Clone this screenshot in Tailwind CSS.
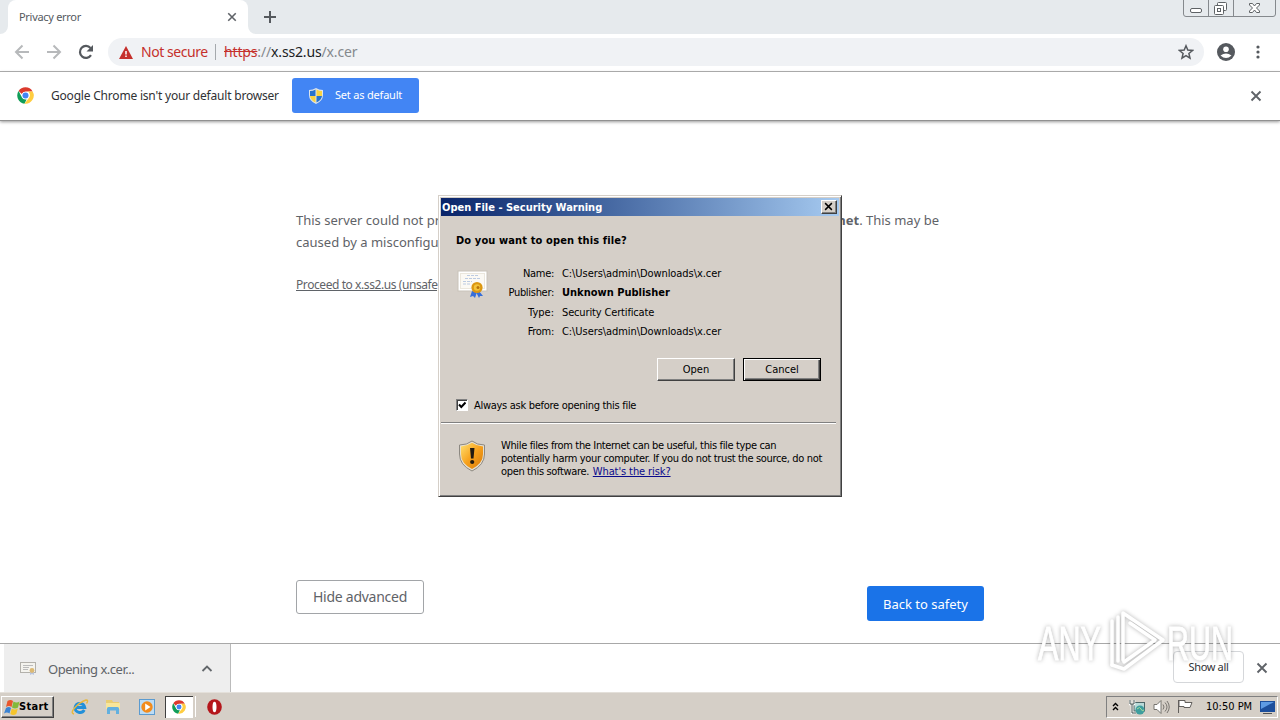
<!DOCTYPE html>
<html lang="en">
<head>
  <meta charset="UTF-8" />
  <meta name="viewport" content="width=device-width, initial-scale=1" />
  <title>Privacy error</title>
  <script src="https://cdn.jsdelivr.net/npm/@tailwindcss/browser@4"></script>
</head>
<body class="relative w-[1280px] h-[720px] overflow-hidden bg-white flex flex-col whitespace-nowrap font-['Noto_Sans','Open_Sans',sans-serif] text-[#5f6368]">

  <!-- shared icons -->
  <svg class="hidden">
    <symbol id="chrome" viewBox="0 0 48 48">
      <circle cx="24" cy="24" r="23" fill="#fff" />
      <path d="M24 1a23 23 0 0 1 20 11.500H24a11.500 11.500 0 0 0-10.500 7L4.500 11.500A23 23 0 0 1 24 1z" fill="#db3a2d" />
      <path d="M4.500 11.500 14 29.500A11.500 11.500 0 0 0 27 35L21 47A23 23 0 0 1 4.500 11.500z" fill="#109d58" />
      <path d="M44 12.500A23 23 0 0 1 21 47L34 30a11.500 11.500 0 0 0-4-17.500z" fill="#ffcd40" />
      <circle cx="24" cy="24" r="10" fill="#fff" />
      <circle cx="24" cy="24" r="8.500" fill="#4285f4" />
    </symbol>
    <symbol id="close" viewBox="0 0 12 12">
      <path d="M1.500 1.500l9 9M10.500 1.500l-9 9" stroke="currentColor" stroke-width="1.900" fill="none" />
    </symbol>
  </svg>

  <!-- tab strip -->
  <div class="h-[34px] shrink-0 bg-[#e6eaed] flex items-start">
    <div class="relative ml-2 h-[34px] w-[240px] bg-white rounded-t-lg flex items-center justify-between pl-[11px] pr-[11px]">
      <span class="text-[11px] tracking-[-0.3px] text-[#55595e]">Privacy error</span>
      <svg class="size-[10px] text-[#5f6368]"><use href="#close" /></svg>
      <svg class="absolute -left-2 bottom-0 size-2" viewBox="0 0 8 8"><path d="M8 0v8H0a8 8 0 0 0 8-8z" fill="#fff" /></svg>
      <svg class="absolute -right-2 bottom-0 size-2" viewBox="0 0 8 8"><path d="M0 0v8h8a8 8 0 0 1-8-8z" fill="#fff" /></svg>
    </div>
    <svg class="ml-4 mt-[11px] size-3" viewBox="0 0 12 12"><path d="M6 0v12M0 6h12" stroke="#55595e" stroke-width="2" /></svg>
    <svg class="ml-auto mr-1 w-[93px] h-[18px]" viewBox="0 0 93 18" fill="none" stroke="#85898d">
      <path d="M.5 0v14q0 2.500 2.500 2.500h87q2.500 0 2.500-2.500V0M25.500 0v16.500M50.500 0v16.500" />
      <g stroke="#5e6265" fill="#fff">
        <rect x="7.500" y="8.500" width="11" height="4" rx="1.500" />
        <rect x="34.500" y="2.500" width="9" height="8" rx="1" />
        <rect x="31.500" y="5.500" width="9" height="9" rx="1" />
        <rect x="34.500" y="8.500" width="3" height="3" />
        <path d="M66.500 3.500h3l2 2.500 2-2.500h3v1.500L73.500 8l3 3v1.500h-3l-2-2.500-2 2.500h-3V11l3-3-3-3z" />
      </g>
    </svg>
  </div>

  <!-- toolbar -->
  <div class="h-[38px] shrink-0 border-b border-[#adadad] flex items-center pl-[14px] pr-[20px] pb-px">
    <svg class="size-4" viewBox="0 0 16 16" fill="none" stroke="#b7b9bb" stroke-width="2"><path d="M15 8H2.500M8.500 1.500L2 8l6.500 6.500" /></svg>
    <svg class="ml-4 size-4" viewBox="0 0 16 16" fill="none" stroke="#b7b9bb" stroke-width="2"><path d="M1 8h12.500M7.500 1.500L14 8l-6.500 6.500" /></svg>
    <svg class="ml-4 size-4" viewBox="0 0 16 16"><path d="M13 11.200A6 6 0 1 1 12.500 4" fill="none" stroke="#55595e" stroke-width="2.200" /><path d="M15 1v6.500H8.500z" fill="#55595e" /></svg>
    <div class="ml-[14px] w-[1096px] h-7 rounded-full bg-[#f0f2f5] flex items-center pl-[11px] pr-[10px] text-[14px]">
      <svg class="w-[14px] h-[13px]" viewBox="0 0 14 13"><path d="M7 0l7 13H0z" fill="#c5302c" /><path d="M7 5v3.500M7 9.500v1.500" stroke="#fff" stroke-width="1.500" /></svg>
      <span class="ml-2 pb-[2px] text-[#c5302c] w-[67px] tracking-[-0.45px]">Not secure</span>
      <span class="ml-[7px] w-px h-4 bg-[#a5a9ad]"></span>
      <span class="ml-2 pb-[2px] text-[#85898d] tracking-[-0.15px]"><span class="text-[#c5302c] line-through">https</span>://<span class="text-[#202124]">x.ss2.us</span>/x.cer</span>
      <svg class="ml-auto size-4" viewBox="0 0 16 16"><path d="M8 1.800l1.800 4.300 4.700.4-3.600 3 1.100 4.600-4-2.500-4 2.500 1.100-4.600-3.600-3 4.700-.4z" fill="none" stroke="#55595e" stroke-width="1.500" /></svg>
    </div>
    <svg class="ml-[13px] size-[18px]" viewBox="0 0 18 18"><circle cx="9" cy="9" r="9" fill="#55595e" /><circle cx="9" cy="6.200" r="2.800" fill="#fff" /><path d="M3.500 12.500q5.500-4 11 0-5.500 5-11 0z" fill="#fff" /></svg>
    <svg class="ml-auto w-1 h-[14px]" viewBox="0 0 4 14" fill="#55595e"><circle cx="2" cy="2" r="1.600" /><circle cx="2" cy="7" r="1.600" /><circle cx="2" cy="12" r="1.600" /></svg>
  </div>

  <!-- default browser bar -->
  <div class="h-[49px] shrink-0 border-b border-[#919191] shadow-[0_1px_3px_#999] flex items-center pl-[17px] pr-[18px] pb-px">
    <svg class="size-[17px]"><use href="#chrome" /></svg>
    <span class="ml-[17px] w-[241px] text-[12px] tracking-[-0.2px] text-[#303134]">Google Chrome isn't your default browser</span>
    <div class="w-[127px] h-[35px] rounded-[3px] bg-[#4285f4] text-white text-[11px] flex items-center pl-[17px]">
      <svg class="w-[14px] h-[16px]" viewBox="0 0 14 16">
        <path d="M7 0q3 2 7 2v5q0 6-7 9Q0 13 0 7V2q4 0 7-2z" fill="#dce4ec" />
        <path d="M6.500 1.500V8H1V3q3 0 5.500-1.500zM7.500 8H13q-.6 4-5.500 6.500z" fill="#2673cf" />
        <path d="M7.500 1.500V8H13V3q-3 0-5.500-1.500zM6.500 8H1q.6 4 5.500 6.500z" fill="#f8d343" />
      </svg>
      <span class="ml-3 tracking-[-0.2px]">Set as default</span>
    </div>
    <svg class="ml-auto mt-px size-3 text-[#5f6368]"><use href="#close" /></svg>
  </div>

  <!-- page -->
  <div class="h-[522px] shrink-0 w-[688px] mx-auto flex flex-col text-[13px] leading-[22px]">
    <p class="mt-[88px] flex justify-between w-[643px]"><span>This server could not prove that it is x.ss2.us;</span><span><b>net</b>. This may be</span></p>
    <p>caused by a misconfiguration</p>
    <a class="mt-[21px] text-[12px] tracking-[-0.42px] underline">Proceed to x.ss2.us (unsafe)</a>
    <div class="mt-auto mb-[22px] flex justify-between">
      <div class="w-[128px] h-[34px] border border-[#a2a5a8] rounded-[3px] flex items-center justify-center text-[14px] tracking-[-0.25px]">Hide advanced</div>
      <div class="mt-[6px] w-[117px] h-[35px] rounded-[3px] bg-[#1a73e8] text-white flex items-center justify-center">Back to safety</div>
    </div>
  </div>

  <!-- download shelf -->
  <div class="h-[49px] shrink-0 border-t border-[#a8a8a8] flex items-center pl-1 pr-3">
    <div class="w-[227px] h-12 bg-[#eee] border-r border-[#bbb] flex items-center pl-4 pr-[17px]">
      <svg class="w-4 h-[15px]" viewBox="0 0 16 15">
        <rect x=".5" y="1.500" width="15" height="10" fill="#f4f3ee" stroke="#b3b1ab" />
        <path d="M3 4.500h10M3 6.500h6M3 8.500h5" stroke="#bbb" /><path d="M10 10v4l2-1 2 1v-4" fill="#b9c5df" /><circle cx="12" cy="9.500" r="2.400" fill="#dcb974" />
      </svg>
      <span class="ml-3 mt-[3px] text-[13px] tracking-[-0.48px]">Opening x.cer...</span>
      <svg class="ml-auto w-3 h-[7px]" viewBox="0 0 12 7"><path d="M1.500 6L6 1.500 10.500 6" fill="none" stroke="#63676b" stroke-width="1.800" /></svg>
    </div>
    <div class="ml-auto w-[71px] h-8 -mt-[2px] border border-[#d5d7da] rounded-[4px] flex items-center justify-center text-[11px] tracking-[-0.35px] text-[#303134]">Show all</div>
    <svg class="ml-3 -mt-px size-3 text-[#5f6368]"><use href="#close" /></svg>
  </div>

  <!-- taskbar -->
  <div class="h-7 shrink-0 bg-[#d5cfc7] border-t border-[#e4e0da] flex items-center text-black font-['DejaVu_Sans_Condensed','DejaVu_Sans',sans-serif] text-[11px]">
    <div class="ml-px mt-px w-[53px] h-[22px] border border-t-white border-l-white border-b-[#404040] border-r-[#404040] shadow-[inset_-1px_-1px_#808080] flex items-center pl-[2px] font-bold">
      <svg class="w-4 h-[15px] shrink-0" viewBox="0 0 16 15">
        <path d="M3.500 1q3-2 5.500 0L7.500 7q-2.500-2-5.500 0z" fill="#e9562c" /><path d="M9.500 1.500q3 2 6 0L14 7.500q-3 2-6 0z" fill="#83b93b" />
        <path d="M2 8q3-2 5 0l-1.500 5.500q-2.500-2-5.500 0z" fill="#3b83d2" /><path d="M7.800 8.500q3 2 6 0l-1.500 5.500q-3 2-6 0z" fill="#f5c52d" />
      </svg>
      <span class="-ml-px mt-px tracking-[0.3px]">Start</span>
    </div>
    <svg class="ml-[17px] w-[18px] h-4" viewBox="0 0 18 16" fill="none">
      <path d="M4.500 8.500h9.300A5 5 0 0 0 4 8.500a5 5 0 0 0 9.300 2.500" stroke="#2290d9" stroke-width="2.800" />
      <path d="M3 15Q-1 14 4 8.500T15 1q3 0 .5 3.500" stroke="#e8b83e" stroke-width="1.400" />
    </svg>
    <svg class="ml-4 w-4 h-4" viewBox="0 0 16 16">
      <path d="M1 1h6l1 2h6v4H1z" fill="#e9cd72" /><path d="M1 4h14v6H1z" fill="#f7e69a" /><path d="M2 15V9.500q0-1.500 1.500-1.500h9q1.500 0 1.500 1.500V15h-3v-3.500H5V15z" fill="#62b0df" />
    </svg>
    <svg class="ml-[18px] size-4" viewBox="0 0 16 16"><rect x=".5" y=".5" width="15" height="15" fill="#bcdcf5" stroke="#5b9bd0" /><circle cx="8" cy="8" r="5.700" fill="#f28b1c" /><path d="M6.200 4.500v7L11.500 8z" fill="#fff" /></svg>
    <div class="ml-[10px] mt-px w-[28px] h-[22px] bg-white border-t border-l border-[#404040] border-r-[#d5cfc7] flex items-center justify-center pr-px pb-px"><svg class="size-[14px]"><use href="#chrome" /></svg></div>
    <div class="ml-px w-0.5 h-[21px] border-r border-white"></div>
    <svg class="ml-[11px] w-[15px] h-4" viewBox="0 0 15 16"><ellipse cx="7.500" cy="8" rx="7.300" ry="7.800" fill="#b5161b" /><ellipse cx="7.500" cy="8" rx="2" ry="5.300" fill="#fff" /></svg>

    <div class="ml-auto mr-[2px] w-[172px] h-[22px] border border-t-[#808080] border-l-[#808080] border-b-white border-r-white flex items-center pl-[5px]">
      <svg class="w-[7px] h-[9px]" viewBox="0 0 7 9" fill="none" stroke="#000" stroke-width="1.400"><path d="M1 4l2.500-2.500L6 4M1 8l2.500-2.500L6 8" /></svg>
      <svg class="ml-[10px] size-4" viewBox="0 0 16 16">
        <rect x="5" y="3.500" width="10.500" height="8.500" fill="#b9dad8" stroke="#4c6567" /><path d="M1 1v4h4V1M3 5v9h4" fill="none" stroke="#fff" stroke-width="2.500" /><path d="M1 1v4h4V1M3 5v9h4" fill="none" stroke="#44514f" stroke-width="1" /><circle cx="11" cy="11" r="4.500" fill="#3e9e9e" /><path d="M8 10q3-3 4 0t3 1" fill="none" stroke="#a8dc9c" />
      </svg>
      <svg class="ml-2 w-[17px] h-4" viewBox="0 0 17 16" fill="none" stroke="#77746f"><path d="M1 5.500h3l4-4v13l-4-4H1z" fill="#fff" /><path d="M10 5.500q2 2.500 0 5M12 3.500q4 4.500 0 9M14 2q4.500 6 0 12" /></svg>
      <svg class="ml-[7px] w-4 h-[15px]" viewBox="0 0 16 15"><path d="M1.500 14V1M2 1.500h6v2h7l-2 5H7v-1H2z" fill="#fff" stroke="#625f5c" /></svg>
      <span class="ml-[13px] mt-[2px] w-[46px]">10:50 PM</span>
      <svg class="ml-2 mt-px w-[15px] h-[13px]" viewBox="0 0 15 13"><rect width="15" height="11" fill="#1d4f9c" /><path d="M1 1h13L1 8z" fill="#5e9be4" /><path d="M3 12.500h9" stroke="#555" /></svg>
    </div>
  </div>

  <!-- watermark -->
  <svg class="absolute left-[1030px] top-[604px] w-[215px] h-[76px] drop-shadow-[0_0_2px_rgba(0,0,0,0.3)]" viewBox="0 0 215 76">
    <g fill="none" stroke="#fff" stroke-linejoin="round" stroke-linecap="round" stroke-width="3.500">
      <path d="M82 61V17M88 57V13" />
      <path d="M93 56V9l40 27-39 29-12-4" />
      <path d="M100 19l25 17-31 22" />
    </g>
    <g font-family="Liberation Sans" font-size="49" fill="#fff" stroke="#fff" stroke-width=".9">
      <text x="8" y="56" textLength="63" lengthAdjust="spacingAndGlyphs">ANY</text>
      <text x="137" y="56" textLength="66" lengthAdjust="spacingAndGlyphs">RUN</text>
    </g>
  </svg>

  <!-- security warning dialog -->
  <div class="absolute left-[438px] top-[195px] w-[404px] h-[302px] bg-[#d5cfc8] border border-t-[#d5cfc8] border-l-[#d5cfc8] border-b-[#404040] border-r-[#404040] shadow-[inset_1px_1px_#fff,inset_-1px_-1px_#808080] p-[2px] text-[11px] leading-[13px] text-black font-['DejaVu_Sans_Condensed','DejaVu_Sans',sans-serif]">
    <div class="h-[18px] bg-gradient-to-r from-[#0a246a] to-[#a6caf0] flex items-center justify-between pl-[1px] pr-[2px] font-bold text-white">
      <span>Open File - Security Warning</span>
      <div class="w-4 h-[14px] bg-[#d5cfc8] border border-t-white border-l-white border-b-[#404040] border-r-[#404040] shadow-[inset_-1px_-1px_#808080] text-black flex items-center justify-center pr-px pb-px"><svg class="size-[9px]"><use href="#close" /></svg></div>
    </div>
    <div class="h-[207px] border-b border-[#808080] shadow-[0_1px_#fff] flex flex-col pl-[15px] pr-[15px] mr-[3px]">
      <h1 class="mt-[18px] font-bold tracking-[0.12px]">Do you want to open this file?</h1>
      <div class="mt-[20px] flex">
        <svg class="w-8 h-8" viewBox="0 0 32 32">
          <rect x="2" y="4" width="29" height="20" fill="#fff" stroke="#c9c3b9" /><rect x="4.500" y="6.500" width="24" height="15" fill="#fbf9f4" stroke="#ebe7dd" />
          <path d="M11 8.500h11M9 11.500h15M7 14.500h9M7 17h8" stroke="#bccbe2" stroke-dasharray="3 1" />
          <path d="M16 24l-2 6 3-1 2 2 2-6zM23 24l4 5-3 0-1 2-3-6z" fill="#366ed9" /><circle cx="21" cy="20.500" r="5.600" fill="#dc9711" /><circle cx="21" cy="20.500" r="3.200" fill="#f4c43b" /><circle cx="22" cy="20.500" r="1.500" fill="#b8730a" />
        </svg>
        <div class="grid grid-cols-[66px_1fr] gap-x-[8px] leading-[19.400px] -mt-[3px]">
          <span class="text-right tracking-[-0.3px]">Name:</span><span class="tracking-[-0.07px]">C:\Users\admin\Downloads\x.cer</span>
          <span class="text-right tracking-[-0.3px]">Publisher:</span><b>Unknown Publisher</b>
          <span class="text-right">Type:</span><span class="tracking-[-0.15px]">Security Certificate</span>
          <span class="text-right tracking-[-0.3px]">From:</span><span class="tracking-[-0.07px]">C:\Users\admin\Downloads\x.cer</span>
        </div>
      </div>
      <div class="mt-auto flex justify-end gap-2">
        <div class="w-[78px] h-[23px] border border-t-white border-l-white border-b-[#404040] border-r-[#404040] shadow-[inset_-1px_-1px_#808080] flex items-center justify-center">Open</div>
        <div class="w-[78px] h-[23px] border border-black shadow-[inset_1px_1px_#fff,inset_-1px_-1px_#404040,inset_-2px_-2px_#808080] flex items-center justify-center">Cancel</div>
      </div>
      <div class="mt-[18px] mb-[10px] flex items-center">
        <div class="-mt-[2px] w-3 h-3 bg-white border border-white border-t-[#808080] border-l-[#808080] shadow-[inset_1px_1px_#404040] flex items-center justify-center"><svg class="w-[8px] h-[8px]" viewBox="0 0 8 8"><path d="M1 3.500L3.300 6 7.500 1.500" fill="none" stroke="#000" stroke-width="2" /></svg></div>
        <span class="ml-[6px] tracking-[-0.29px]">Always ask before opening this file</span>
      </div>
    </div>
    <div class="mt-[16px] pl-[17px] flex">
      <svg class="mt-px w-7 h-8 shrink-0" viewBox="0 0 28 32">
        <defs>
          <linearGradient id="gold" x1="0" y1="0" x2="1" y2="1"><stop offset="0" stop-color="#ffe173" /><stop offset=".5" stop-color="#f7a21d" /><stop offset="1" stop-color="#d87908" /></linearGradient>
        </defs>
        <path d="M14 1q5 4 12.500 4v9q0 11-12.500 17Q1.500 25 1.500 14V5Q9 5 14 1z" fill="#e6dfcf" stroke="#8c8881" />
        <path d="M14 2.800q4.500 3.200 11 3.700V14q0 9.500-11 15Q3 23.500 3 14V6.500Q9.500 6 14 2.800z" fill="url(#gold)" />
        <path d="M12 8h4.500l-1 10.500h-2.500z" fill="#221a11" /><circle cx="14.200" cy="22" r="2.100" fill="#221a11" />
      </svg>
      <p class="ml-[15px] tracking-[-0.35px]">While files from the Internet can be useful, this file type can<br />potentially harm your computer. If you do not trust the source, do not<br />open this software. <a class="ml-px text-[#0a0a8c] underline tracking-[-0.1px]">What's the risk?</a></p>
    </div>
  </div>

</body>
</html>
